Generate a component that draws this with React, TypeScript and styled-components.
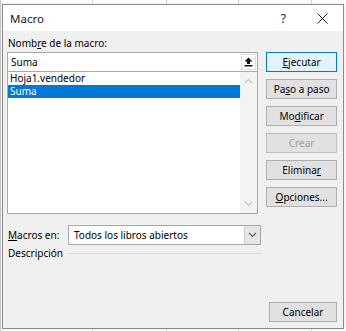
import styled, { createGlobalStyle } from 'styled-components';

const GlobalStyle = createGlobalStyle`
  html, body {
    margin: 0;
    padding: 0;
    background: #ffffff;
  }
  body {
    font-family: "Noto Sans", "DejaVu Sans", sans-serif;
    font-size: 10px;
    color: #000;
  }
`;

const RIGHT_BUTTONS = [
  { key: 'run', label: 'Ejecutar', hot: 0, primary: true },
  { key: 'step', label: 'Paso a paso', hot: 2 },
  { key: 'edit', label: 'Modificar', hot: 2 },
  { key: 'create', label: 'Crear', hot: -1, disabled: true },
  { key: 'delete', label: 'Eliminar', hot: 7 },
  { key: 'options', label: 'Opciones...', hot: 0 },
];

const withHotkey = (text: string, index: number) =>
  index < 0 ? (
    text
  ) : (
    <>
      {text.slice(0, index)}
      <u>{text[index]}</u>
      {text.slice(index + 1)}
    </>
  );

const UpIcon = () => (
  <svg width="9" height="10" viewBox="0 0 9 10">
    <path d="M4.5 0.5 L8.5 4.5 L6 4.5 L6 7 L3 7 L3 4.5 L0.5 4.5 Z" fill="#111" />
    <rect x="0.5" y="8" width="8" height="1.5" fill="#111" />
  </svg>
);

const Chevron = ({ up, color }: { up?: boolean; color: string }) => (
  <svg width="9" height="6" viewBox="0 0 9 6">
    <path
      d={up ? 'M1 5 L4.5 1.5 L8 5' : 'M1 1 L4.5 4.5 L8 1'}
      stroke={color}
      strokeWidth="1.2"
      fill="none"
    />
  </svg>
);

const CloseIcon = () => (
  <svg width="11" height="11" viewBox="0 0 11 11">
    <path d="M0.5 0.5 L10.5 10.5 M10.5 0.5 L0.5 10.5" stroke="#222" strokeWidth="1" />
  </svg>
);

export default function App() {
  return (
    <>
      <GlobalStyle />
      <Page>
        <Dialog>
          <TitleBar>
            <Title>Macro</Title>
            <TitleControls>
              <Help>?</Help>
              <CloseIcon />
            </TitleControls>
          </TitleBar>

          <Body>
            <Top>
              <LeftCol>
                <FieldLabel>{withHotkey('Nombre de la macro:', 4)}</FieldLabel>
                <NameInput>
                  <span>Suma</span>
                  <UpButton>
                    <UpIcon />
                  </UpButton>
                </NameInput>
                <MacroList>
                  <Items>
                    <Item>Hoja1.vendedor</Item>
                    <Item $selected>Suma</Item>
                  </Items>
                  <Scrollbar>
                    <Chevron up color="#c6c6c6" />
                    <Chevron color="#c6c6c6" />
                  </Scrollbar>
                </MacroList>
              </LeftCol>

              <RightCol>
                {RIGHT_BUTTONS.map(({ key, label, hot, primary, disabled }) => (
                  <DialogButton key={key} $primary={primary} $disabled={disabled}>
                    {withHotkey(label, hot)}
                  </DialogButton>
                ))}
              </RightCol>
            </Top>

            <MacrosRow>
              <RowLabel>{withHotkey('Macros en:', 0)}</RowLabel>
              <Select>
                <span>Todos los libros abiertos</span>
                <SelectArrow>
                  <Chevron color="#666" />
                </SelectArrow>
              </Select>
            </MacrosRow>

            <DescRow>
              <RowLabel>Descripción</RowLabel>
              <Rule />
            </DescRow>

            <Footer>
              <DialogButton $wide>Cancelar</DialogButton>
            </Footer>
          </Body>
        </Dialog>
      </Page>
    </>
  );
}

const Page = styled.div`
  width: 346px;
  height: 331px;
  box-sizing: border-box;
  padding: 4px 2px 2px 2px;
  background-color: #ffffff;
  background-image: linear-gradient(to right, transparent 92px, #d6d6d6 92px, #d6d6d6 93px, transparent 93px),
    linear-gradient(to right, transparent 166px, #d6d6d6 166px, #d6d6d6 167px, transparent 167px),
    linear-gradient(to right, transparent 238px, #d6d6d6 238px, #d6d6d6 239px, transparent 239px),
    linear-gradient(to right, transparent 311px, #d6d6d6 311px, #d6d6d6 312px, transparent 312px),
    linear-gradient(to right, #c8c8c8 1px, transparent 1px);
`;

const Dialog = styled.div`
  height: 100%;
  box-sizing: border-box;
  display: flex;
  flex-direction: column;
  border: 1px solid #8a8a8a;
  background: #f0f0f0;
  box-shadow: 0 0 2px rgba(0, 0, 0, 0.15);
`;

const TitleBar = styled.div`
  height: 26px;
  flex-shrink: 0;
  display: flex;
  align-items: center;
  justify-content: space-between;
  padding: 0 15px 0 7px;
  background: #ffffff;
`;

const Title = styled.div`
  font-size: 11.5px;
  color: #1a1a1a;
`;

const TitleControls = styled.div`
  display: flex;
  align-items: center;
  gap: 31px;
`;

const Help = styled.span`
  font-size: 12px;
  color: #222;
`;

const Body = styled.div`
  flex: 1;
  display: flex;
  flex-direction: column;
  padding: 6px 6px 6px 4px;
`;

const Top = styled.div`
  display: flex;
  gap: 8px;
`;

const LeftCol = styled.div`
  width: 252px;
  display: flex;
  flex-direction: column;
`;

const FieldLabel = styled.div`
  height: 15px;
  line-height: 13px;
  padding-left: 1px;
`;

const NameInput = styled.div`
  height: 20px;
  box-sizing: border-box;
  display: flex;
  align-items: center;
  justify-content: space-between;
  padding: 0 1px 0 3px;
  background: #fff;
  border: 1px solid #a8a8a8;
`;

const UpButton = styled.div`
  width: 15px;
  height: 16px;
  display: flex;
  align-items: center;
  justify-content: center;
  border: 1px solid #dcdcdc;
  box-sizing: border-box;
`;

const MacroList = styled.div`
  height: 142px;
  box-sizing: border-box;
  display: flex;
  background: #fff;
  border: 1px solid #a8a8a8;
  border-top: none;
`;

const Items = styled.div`
  flex: 1;
  padding-top: 0;
`;

const Item = styled.div<{ $selected?: boolean }>`
  height: 13px;
  line-height: 13px;
  padding-left: 2px;
  background: ${({ $selected }) => ($selected ? '#0078d7' : 'transparent')};
  color: ${({ $selected }) => ($selected ? '#fff' : '#000')};
`;

const Scrollbar = styled.div`
  width: 17px;
  display: flex;
  flex-direction: column;
  align-items: center;
  justify-content: space-between;
  padding: 6px 0;
  background: #f3f3f3;
`;

const RightCol = styled.div`
  width: 71px;
  display: flex;
  flex-direction: column;
  gap: 7px;
  padding-top: 15px;
`;

const DialogButton = styled.div<{ $primary?: boolean; $disabled?: boolean; $wide?: boolean }>`
  height: 20px;
  width: ${({ $wide }) => ($wide ? '68px' : 'auto')};
  box-sizing: border-box;
  display: flex;
  align-items: center;
  justify-content: center;
  background: ${({ $primary }) => ($primary ? '#e5f1fb' : '#e1e1e1')};
  border: 1px solid ${({ $primary, $disabled }) => ($primary ? '#0078d7' : $disabled ? '#bfbfbf' : '#adadad')};
  color: ${({ $disabled }) => ($disabled ? '#a0a0a0' : '#000')};
`;

const MacrosRow = styled.div`
  display: flex;
  align-items: center;
  margin-top: 11px;
  width: 254px;
`;

const RowLabel = styled.div`
  width: 60px;
  padding-left: 1px;
  flex-shrink: 0;
`;

const Select = styled.div`
  flex: 1;
  height: 20px;
  box-sizing: border-box;
  display: flex;
  align-items: center;
  justify-content: space-between;
  padding-left: 5px;
  background: #fff;
  border: 1px solid #a8a8a8;
`;

const SelectArrow = styled.div`
  width: 15px;
  height: 18px;
  display: flex;
  align-items: center;
  justify-content: center;
  background: #e5e5e5;
  border-left: 1px solid #cfcfcf;
`;

const DescRow = styled.div`
  display: flex;
  align-items: center;
  margin-top: 1px;
  width: 254px;
  height: 14px;
`;

const Rule = styled.div`
  flex: 1;
  height: 1px;
  background: #dcdcdc;
`;

const Footer = styled.div`
  margin-top: auto;
  display: flex;
  justify-content: flex-end;
`;
